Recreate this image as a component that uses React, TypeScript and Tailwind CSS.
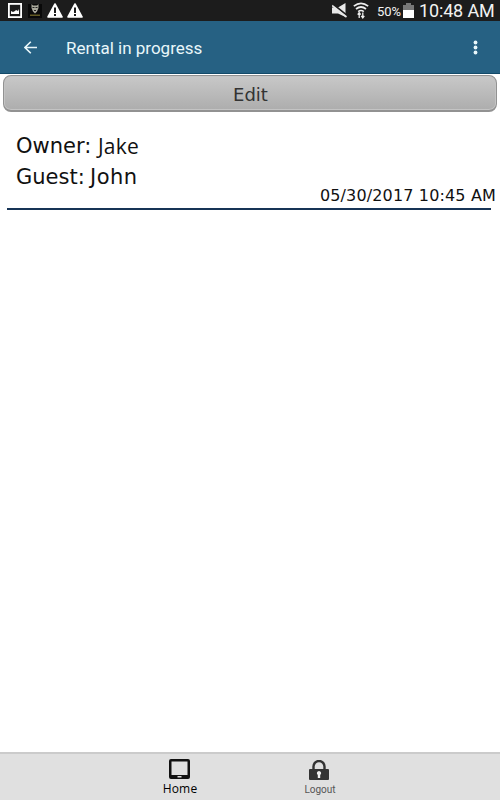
function StatusBar() {
  return (
    <div className="flex h-[21px] items-center bg-[#1c1c1c] pl-2 pr-1.5 text-[#f2f2f2]">
      <svg width="14" height="15" viewBox="0 0 14 15">
        <rect x="0.9" y="0.9" width="12.2" height="13.2" fill="none" stroke="#fff" strokeWidth="1.8" />
        <path d="M3 11V8l2 1 2-1 1-1 2 1 1-2v5z" fill="#fff" />
      </svg>
      <svg width="14" height="14" viewBox="0 0 14 14" className="ml-1.5">
        <rect width="14" height="14" fill="#090909" />
        <path d="M3.500 0l1.500 1.500h4L10.500 0v4L9 7.500 7 9.500 5 7.500 3.500 4z" fill="#aaa99c" />
        <path d="M4.500 3h2v1h-2zM7.500 3h2v1h-2zM6 6h2v1H6z" fill="#222" />
        <path d="M2 10.500h10v1.500H2z" fill="#625923" />
      </svg>
      {[0, 1].map((n) => (
        <svg key={n} width="16" height="15" viewBox="0 0 16 15" className="ml-1 translate-x-px">
          <path d="M8 1l7 13H1z" fill="#fff" stroke="#fff" strokeWidth="1.6" strokeLinejoin="round" />
          <path d="M7 4.500h2V10H7zM7 11h2v2H7z" fill="#1c1c1c" />
        </svg>
      ))}
      <div className="ml-auto flex h-full items-center font-[Roboto,sans-serif]">
        <svg width="15" height="15" viewBox="0 0 15 15">
          <path d="M0 4.500h6L13.500 0v14L6 10.500H0z" fill="#e8e8e8" />
          <path d="M0 .5l15 12" stroke="#1c1c1c" strokeWidth="2" />
          <path d="M0 2.500l14.500 11.500" stroke="#e8e8e8" strokeWidth="1.700" />
        </svg>
        <svg width="16" height="17" viewBox="0 0 16 17" className="ml-1.5" fill="none" stroke="#eee">
          <path d="M.8 4.200q7.200-5.800 14.400 0M3 7q5-4 10 0M5.200 9.600q2.800-2.200 5.600 0" strokeWidth="1.700" />
          <path d="M6.200 16v-5M9.800 10.500v5M4.700 12.700l1.500-2 1.500 2M8.300 13.800l1.500 2 1.500-2" strokeWidth="1.300" />
        </svg>
        <span className="ml-2 mt-0.5 w-[25px] whitespace-nowrap text-[13px] leading-none tracking-[-0.1px]">50%</span>
        <svg width="11" height="15" viewBox="0 0 11 15" className="ml-px">
          <path d="M3 0h5v2h3v6H0V2h3z" fill="#777" />
          <path d="M0 7h11v8H0z" fill="#fff" />
        </svg>
        <span className="ml-[5px] w-[75px] whitespace-nowrap text-[18px] leading-none tracking-[-0.15px]">10:48 AM</span>
      </div>
    </div>
  );
}

function Header() {
  return (
    <header className="flex h-[53px] items-center border-b border-[#134a69] bg-[#266183] pl-6 pr-[22px] text-[#e9f7fa]">
      <svg width="13" height="13" viewBox="0 0 13 13" fill="none" stroke="currentColor" strokeWidth="1.600">
        <path d="M13 6.500H1M6.800.7L1 6.500l5.800 5.800" />
      </svg>
      <h1 className="ml-[29px] mt-0.5 font-[Roboto,sans-serif] text-[17px] leading-none">Rental in progress</h1>
      <svg width="5" height="15" viewBox="0 0 5 15" className="ml-auto" fill="currentColor">
        <circle cx="2.500" cy="2.500" r="1.900" />
        <circle cx="2.500" cy="7.500" r="1.900" />
        <circle cx="2.500" cy="12.500" r="1.900" />
      </svg>
    </header>
  );
}

function TabBar() {
  return (
    <nav className="flex h-12 justify-center border-t-2 border-[#cbcbcb] bg-[#e0e0e0]">
      <button className="flex w-[140px] flex-col items-center pt-[5px] text-black">
        <svg width="21" height="20" viewBox="0 0 21 20" className="mr-0.5">
          <path
            fillRule="evenodd"
            d="M2 0h17q2 0 2 2v16q0 2-2 2H2q-2 0-2-2V2q0-2 2-2zM2.500 2.500v13.500h16V2.500z"
            fill="#111"
          />
          <rect x="8.500" y="17" width="4" height="1.500" fill="#ddd" />
        </svg>
        <span className="mt-1 font-['Open_Sans',sans-serif] text-[12px] leading-3 tracking-[0.2px]">Home</span>
      </button>
      <button className="flex w-[140px] flex-col items-center pt-1.5 text-[#555]">
        <svg width="20" height="20" viewBox="0 0 20 20" className="mr-0.5">
          <path d="M4.500 10V6.500a5.500 5.500 0 0 1 11 0V10" fill="none" stroke="#333" strokeWidth="2.400" />
          <rect y="9" width="20" height="11" rx="1" fill="#333" />
          <path d="M10 11a2.200 2.200 0 0 1 1.200 4v3H8.800v-3A2.200 2.200 0 0 1 10 11z" fill="#eee" />
        </svg>
        <span className="mt-1 font-[Roboto,sans-serif] text-[10px] leading-3">Logout</span>
      </button>
    </nav>
  );
}

export default function App() {
  return (
    <div className="flex h-[800px] w-[500px] flex-col overflow-hidden bg-white">
      <StatusBar />
      <Header />
      <main className="flex-1 font-['DejaVu_Sans',sans-serif] text-[#111]">
        <button className="mx-[3px] mt-px flex h-[37px] w-[494px] items-center justify-center rounded-lg border border-b-2 border-[#929292] bg-linear-to-b from-[#c8c8c8] to-[#adadad] pl-px pt-0.5 text-[18px] text-[#333] shadow-[inset_0_0_0_1px_#c4c4c4]">
          Edit
        </button>
        <section className="ml-[7px] mr-[9px] h-[98px] border-b-2 border-[#173456] pl-[9px] pt-[19px]">
          <p className="flex h-[31px] items-center text-[21px] leading-none">
            <span className="w-[82px] whitespace-nowrap">Owner:</span>
            <span className="font-['Open_Sans',sans-serif] tracking-[0.2px]">Jake</span>
          </p>
          <p className="flex h-[31px] items-center text-[21px] leading-none">
            <span className="w-[74px] whitespace-nowrap">Guest:</span>
            <span className="tracking-[0.5px]">John</span>
          </p>
          <p className="-mr-[5px] -mt-[5px] whitespace-nowrap text-right text-[16px] leading-none tracking-[0.15px]">
            05/30/2017 10:45 AM
          </p>
        </section>
      </main>
      <TabBar />
    </div>
  );
}
